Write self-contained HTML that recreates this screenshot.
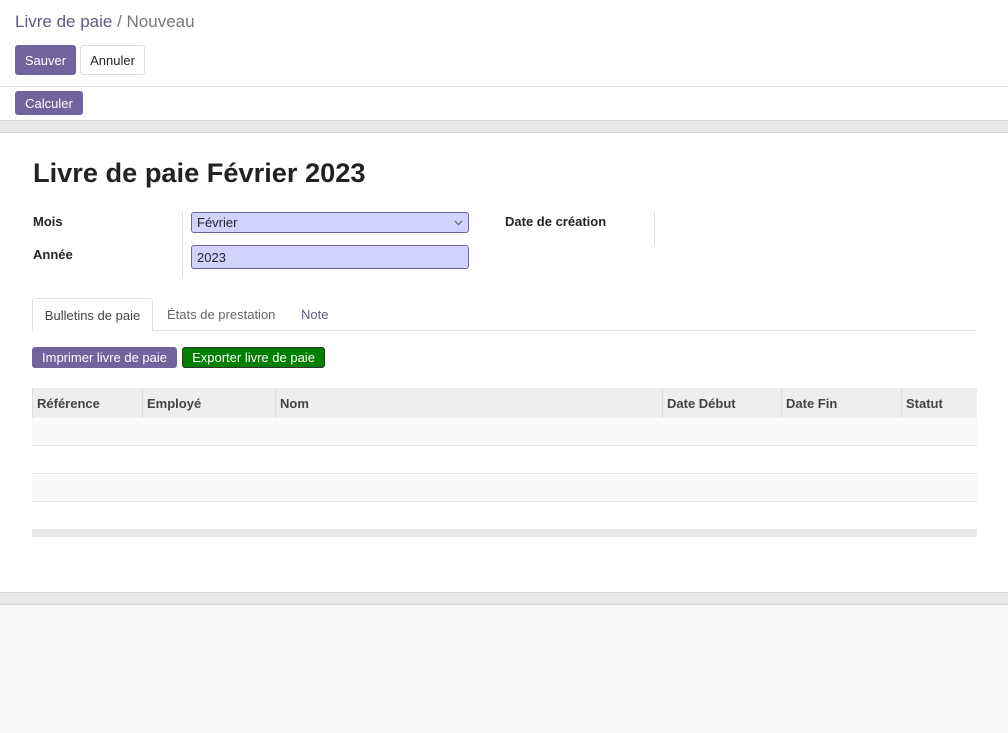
<!DOCTYPE html>
<html><head><meta charset="utf-8"><style>
*{box-sizing:border-box;margin:0;padding:0}
body{width:1008px;height:733px;background:#f8f9fa;font-family:"Liberation Sans",Arial,sans-serif;font-size:13px;color:#212529;position:relative;overflow:hidden}
.a{position:absolute}
.top{left:0;top:0;width:1008px;height:120px;background:#fff}
.btn{position:absolute;border-radius:3px;font-size:13px;display:flex;align-items:center;justify-content:center}
.p{background:#71639e;color:#fff}
.band{left:0;width:1008px;height:13px;background:#e9e9e9;border-top:1px solid #d8d8d8;border-bottom:1px solid #d8d8d8}
.lbl{font-weight:bold;font-size:13px}
.inp{background:#d2d2ff;border:1px solid #71639e;border-radius:3px;padding-left:5px;display:flex;align-items:center;font-size:13px}
th{font-weight:bold;text-align:left;color:#444;padding-left:4px;border-left:1px solid #ddd}
</style></head><body>
<div class="a top"></div>
<div class="a" style="left:15px;top:12px;font-size:17px;color:#5f5a83">Livre de paie <span style="color:#777">/ Nouveau</span></div>
<div class="btn p" style="left:15px;top:45px;width:61px;height:30px">Sauver</div>
<div class="btn" style="left:80px;top:45px;width:65px;height:30px;border:1px solid #ddd;background:#fff">Annuler</div>
<div class="a" style="left:0;top:86px;width:1008px;height:1px;background:#dcdce4"></div>
<div class="btn p" style="left:15px;top:91px;width:68px;height:24px">Calculer</div>
<div class="a band" style="top:120px"></div>
<div class="a" style="left:0;top:133px;width:1008px;height:459px;background:#fff"></div>
<div class="a band" style="top:592px"></div>
<div class="a" style="left:33px;top:157px;font-size:27.2px;font-weight:bold;color:#222">Livre de paie Février 2023</div>
<div class="a lbl" style="left:33px;top:214px">Mois</div>
<div class="a lbl" style="left:33px;top:247px">Année</div>
<div class="a" style="left:182px;top:212px;width:1px;height:65px;background:#ddd"></div>
<div class="a inp" style="left:191px;top:212px;width:278px;height:21px">Février<svg style="position:absolute;right:5px;top:7px" width="9" height="6" viewBox="0 0 9 6"><path d="M1 1l3.5 3.5L8 1" fill="none" stroke="#666" stroke-width="1.2"/></svg></div>
<div class="a inp" style="left:191px;top:245px;width:278px;height:24px">2023</div>
<div class="a lbl" style="left:505px;top:214px">Date de création</div>
<div class="a" style="left:654px;top:212px;width:1px;height:33px;background:#ddd"></div>
<div class="a" style="left:32px;top:330px;width:945px;height:1px;background:#dee2e6"></div>
<div class="a" style="left:32px;top:298px;width:121px;height:33px;border:1px solid #dee2e6;border-bottom:none;background:#fff;border-radius:3px 3px 0 0;display:flex;align-items:center;justify-content:center;color:#444">Bulletins de paie</div>
<div class="a" style="left:167px;top:307px;color:#666">États de prestation</div>
<div class="a" style="left:301px;top:307px;color:#5f5a83">Note</div>
<div class="btn p" style="left:32px;top:347px;width:145px;height:21px">Imprimer livre de paie</div>
<div class="btn" style="left:182px;top:347px;width:143px;height:21px;background:#008000;color:#fff;border:1px solid #333">Exporter livre de paie</div>
<table class="a" style="left:32px;top:388px;width:945px;border-collapse:collapse">
<tr style="height:30px;background:#eee"><th style="width:110px">Référence</th><th style="width:133px">Employé</th><th style="width:387px">Nom</th><th style="width:119px">Date Début</th><th style="width:120px">Date Fin</th><th>Statut</th></tr>
</table>
<div class="a" style="left:32px;top:418px;width:945px;height:28px;background:#fafafa;border-bottom:1px solid #e8e8e8"></div>
<div class="a" style="left:32px;top:446px;width:945px;height:28px;background:#fff;border-bottom:1px solid #e8e8e8"></div>
<div class="a" style="left:32px;top:474px;width:945px;height:28px;background:#fafafa;border-bottom:1px solid #e8e8e8"></div>
<div class="a" style="left:32px;top:529px;width:945px;height:8px;background:#e9e9e9"></div>
</body></html>
